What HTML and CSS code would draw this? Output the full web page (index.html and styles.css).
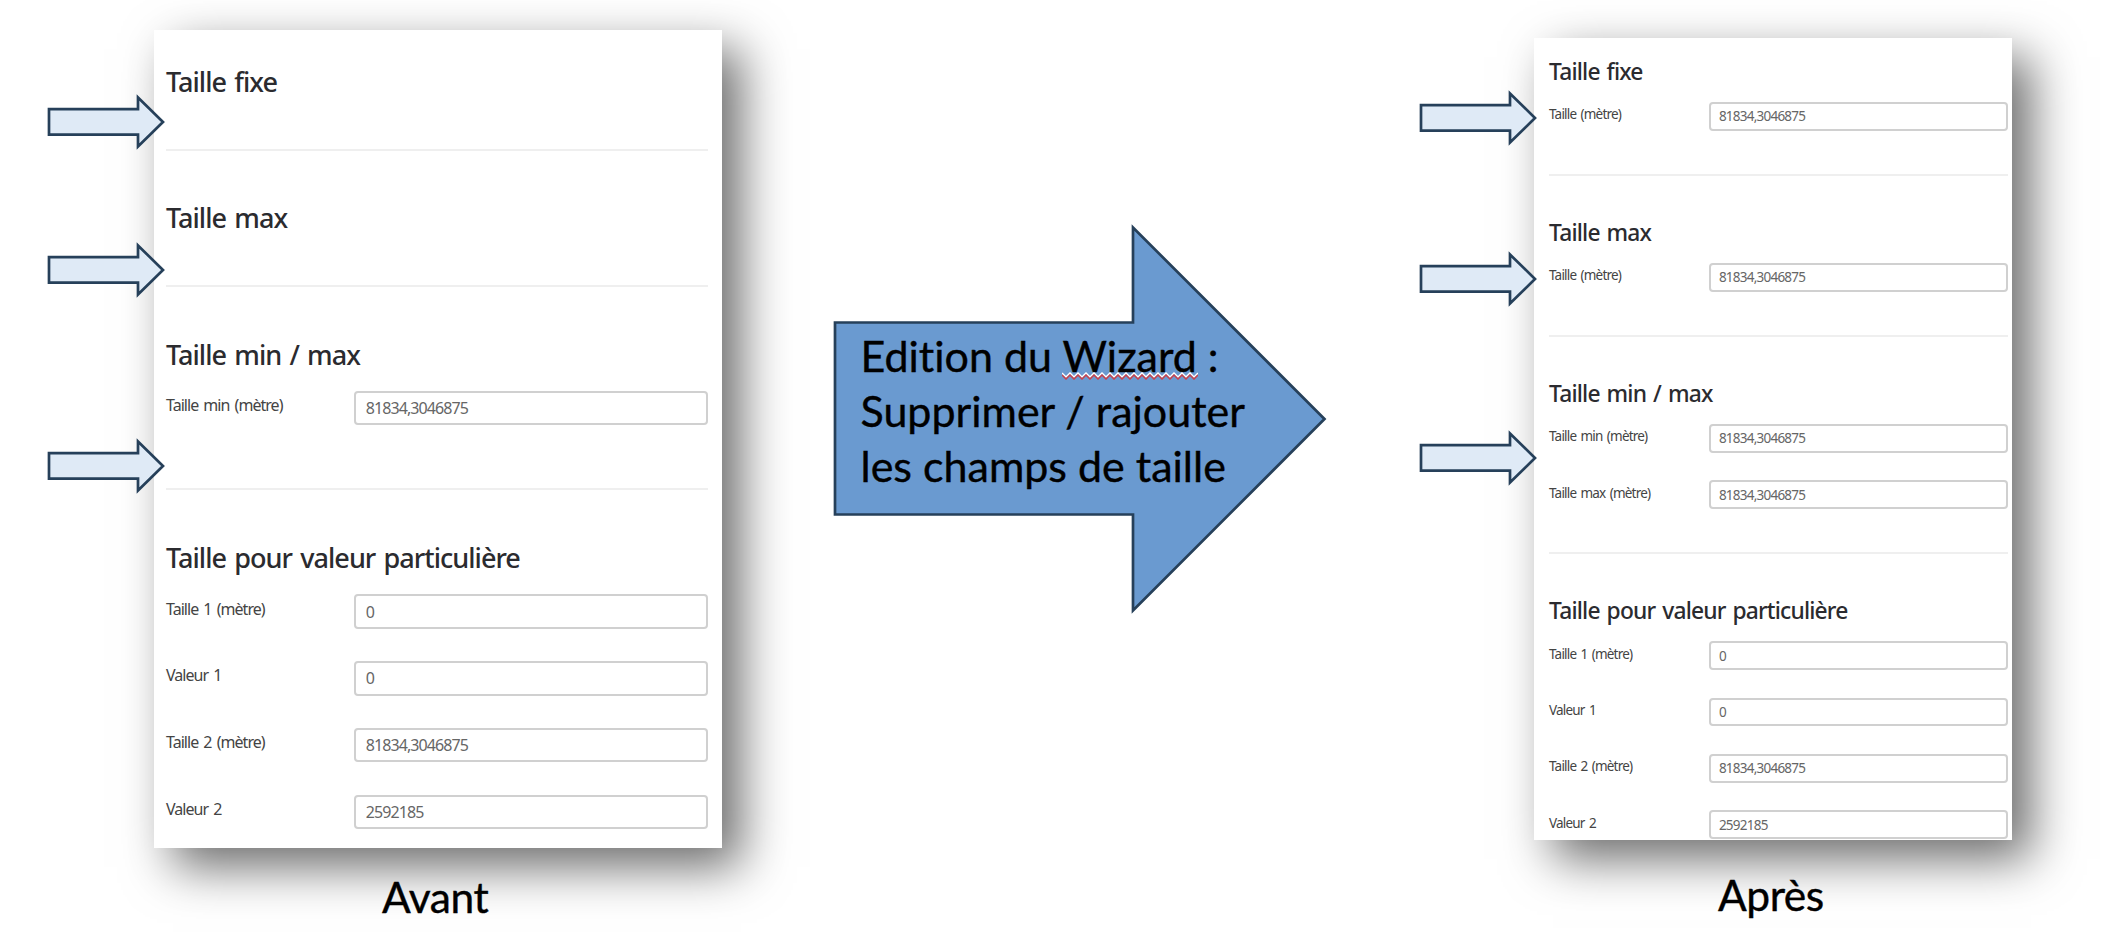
FILE: index.html
```html
<!DOCTYPE html>
<html lang="fr">
<head>
    <meta charset="UTF-8">
    <title>Edition du Wizard</title>
    <link rel="stylesheet" href="styles.css">
</head>
<body>

<!-- Arrow shapes shared by the annotations -->
<svg width="0" height="0" class="defs">
    <symbol id="arrow" viewBox="0 0 118 56">
        <path d="M2 15.2H91V3.500L116 28L91 52.500V40.6H2Z" />
    </symbol>
</svg>

<div class="slide">
    <!-- Before -->
    <div class="column before">
        <div class="card">
            <section>
                <h2>Taille fixe</h2>
            </section>
            <section>
                <h2>Taille max</h2>
            </section>
            <section>
                <h2>Taille min / max</h2>
                <div class="row"><label>Taille min (mètre)</label><input type="text" value="81834,3046875"></div>
            </section>
            <section>
                <h2>Taille pour valeur particulière</h2>
                <div class="row"><label>Taille 1 (mètre)</label><input type="text" value="0"></div>
                <div class="row"><label>Valeur 1</label><input type="text" value="0"></div>
                <div class="row"><label>Taille 2 (mètre)</label><input type="text" value="81834,3046875"></div>
                <div class="row"><label>Valeur 2</label><input type="text" value="2592185"></div>
            </section>
        </div>
        <div class="caption">Avant</div>
        <svg class="pointer first"><use href="#arrow" /></svg>
        <svg class="pointer second"><use href="#arrow" /></svg>
        <svg class="pointer third"><use href="#arrow" /></svg>
    </div>

    <!-- Big arrow in the middle -->
    <div class="big-arrow">
        <svg class="shape" viewBox="0 0 494 390">
            <path d="M2 98.5H300V3.5L491.5 195L300 386.500V290.500H2Z" />
        </svg>
        <p>
            <span class="line">Edition du <span class="typo">Wizard<svg class="squiggle" viewBox="0 0 136 8">
                <path class="halo" d="M0 1l4 4l4-4l4 4l4-4l4 4l4-4l4 4l4-4l4 4l4-4l4 4l4-4l4 4l4-4l4 4l4-4l4 4l4-4l4 4l4-4l4 4l4-4l4 4l4-4l4 4l4-4l4 4l4-4l4 4l4-4l4 4l4-4l4 4l4-4" />
                <path class="red" d="M0 3l4 4l4-4l4 4l4-4l4 4l4-4l4 4l4-4l4 4l4-4l4 4l4-4l4 4l4-4l4 4l4-4l4 4l4-4l4 4l4-4l4 4l4-4l4 4l4-4l4 4l4-4l4 4l4-4l4 4l4-4l4 4l4-4l4 4l4-4" />
            </svg></span> :</span>
            <span class="line">Supprimer / rajouter</span>
            <span class="line">les champs de taille</span>
        </p>
    </div>

    <!-- After -->
    <div class="column after">
        <div class="card">
            <section>
                <h2>Taille fixe</h2>
                <div class="row"><label>Taille (mètre)</label><input type="text" value="81834,3046875"></div>
            </section>
            <section>
                <h2>Taille max</h2>
                <div class="row"><label>Taille (mètre)</label><input type="text" value="81834,3046875"></div>
            </section>
            <section>
                <h2>Taille min / max</h2>
                <div class="row"><label>Taille min (mètre)</label><input type="text" value="81834,3046875"></div>
                <div class="row"><label>Taille max (mètre)</label><input type="text" value="81834,3046875"></div>
            </section>
            <section>
                <h2>Taille pour valeur particulière</h2>
                <div class="row"><label>Taille 1 (mètre)</label><input type="text" value="0"></div>
                <div class="row"><label>Valeur 1</label><input type="text" value="0"></div>
                <div class="row"><label>Taille 2 (mètre)</label><input type="text" value="81834,3046875"></div>
                <div class="row"><label>Valeur 2</label><input type="text" value="2592185"></div>
            </section>
        </div>
        <div class="caption">Après</div>
        <svg class="pointer first"><use href="#arrow" /></svg>
        <svg class="pointer second"><use href="#arrow" /></svg>
        <svg class="pointer third"><use href="#arrow" /></svg>
    </div>
</div>

</body>
</html>
```
FILE: styles.css
```css
* {
    box-sizing: border-box;
}

body {
    margin: 0;
    background-color: #fff;
    font-family: "Noto Sans", "Open Sans", sans-serif;
}

.defs {
    position: absolute;
}

.slide {
    width: 2104px;
    height: 932px;
    padding: 0 92px 0 154px;
    display: flex;
    justify-content: space-between;
    align-items: flex-start;
    overflow: hidden;
}

.column {
    position: relative;
}

.card {
    background-color: #fff;
    box-shadow: 19px 19px 46px rgba(0, 0, 0, 0.58);
    overflow: hidden;
}

.before {
    width: 568px;
    padding-top: 30px;
}

.before .card {
    height: 818px;
    padding: 33px 14px 0 12px;
    font-size: 16px;
}

.after {
    width: 478px;
    padding-top: 38px;
}

.after .card {
    height: 802px;
    padding: 18px 4px 0 15px;
    font-size: 13.5px;
}

section {
    padding-bottom: 1.89em;
}

.after section {
    padding-bottom: 1.18em;
}

section + section {
    border-top: 2px solid #efefef;
    padding-top: 3.04em;
}

h2 {
    margin: 0 0 0.72em;
    height: 1.333em;
    color: #2b2b2f;
    font-size: 1.69em;
    font-weight: 500;
    line-height: 1.38;
    letter-spacing: -0.036em;
    word-spacing: 0.08em;
    white-space: nowrap;
}

.after h2 {
    margin-bottom: 0.67em;
}

.row {
    display: grid;
    grid-template-columns: 11.76em 1fr;
    align-items: start;
    height: 4.178em;
}

.after .row {
    grid-template-columns: 11.84em 1fr;
}

label {
    padding-top: 0.2em;
    color: #444;
    line-height: 1.4;
    letter-spacing: -0.06em;
    word-spacing: 0.12em;
    white-space: nowrap;
}

.after label {
    padding-top: 0.26em;
}

input {
    width: 100%;
    height: 2.14em;
    padding: 0 0.6em;
    border: 2px solid #d0d0d0;
    border-radius: 4px;
    background-color: #fff;
    color: #666;
    font-family: inherit;
    font-size: 1em;
    letter-spacing: -0.057em;
}

.caption {
    position: absolute;
    color: #000;
    font-family: Lato, sans-serif;
    font-size: 42.500px;
    line-height: 50px;
    letter-spacing: -0.01em;
    -webkit-text-stroke: 0.4px #000;
}

.before .caption {
    left: 228px;
    top: 872px;
}

.after .caption {
    left: 184px;
    top: 870px;
}

/* Small arrows that point at the fields */
.pointer {
    position: absolute;
    width: 118px;
    height: 56px;
    fill: #dfeaf6;
    stroke: #26405a;
    stroke-width: 2.7;
}

.before .pointer {
    left: -107px;
}

.before .first {
    top: 94px;
}

.before .second {
    top: 242px;
}

.before .third {
    top: 438px;
}

.after .pointer {
    left: -115px;
}

.after .first {
    top: 90px;
}

.after .second {
    top: 251px;
}

.after .third {
    top: 430px;
}

.big-arrow {
    position: relative;
    width: 494px;
    height: 390px;
    margin: 224px 97px 0 0;
}

.shape {
    position: absolute;
    inset: 0;
    fill: #6a9ad0;
    stroke: #26405a;
    stroke-width: 2.7;
}

.big-arrow p {
    position: relative;
    margin: 0;
    padding: 105px 0 0 28px;
    color: #000;
    font-family: Lato, sans-serif;
    font-size: 43px;
    line-height: 54.8px;
    font-variant-ligatures: none;
    white-space: nowrap;
    -webkit-text-stroke: 0.4px #000;
}

.line {
    display: block;
}

.typo {
    position: relative;
}

.squiggle {
    position: absolute;
    left: 0;
    top: 42px;
    width: 136px;
    height: 8px;
    fill: none;
    stroke-width: 1.5;
}

.halo {
    stroke: #fff;
}

.red {
    stroke: #c8414b;
}
```
